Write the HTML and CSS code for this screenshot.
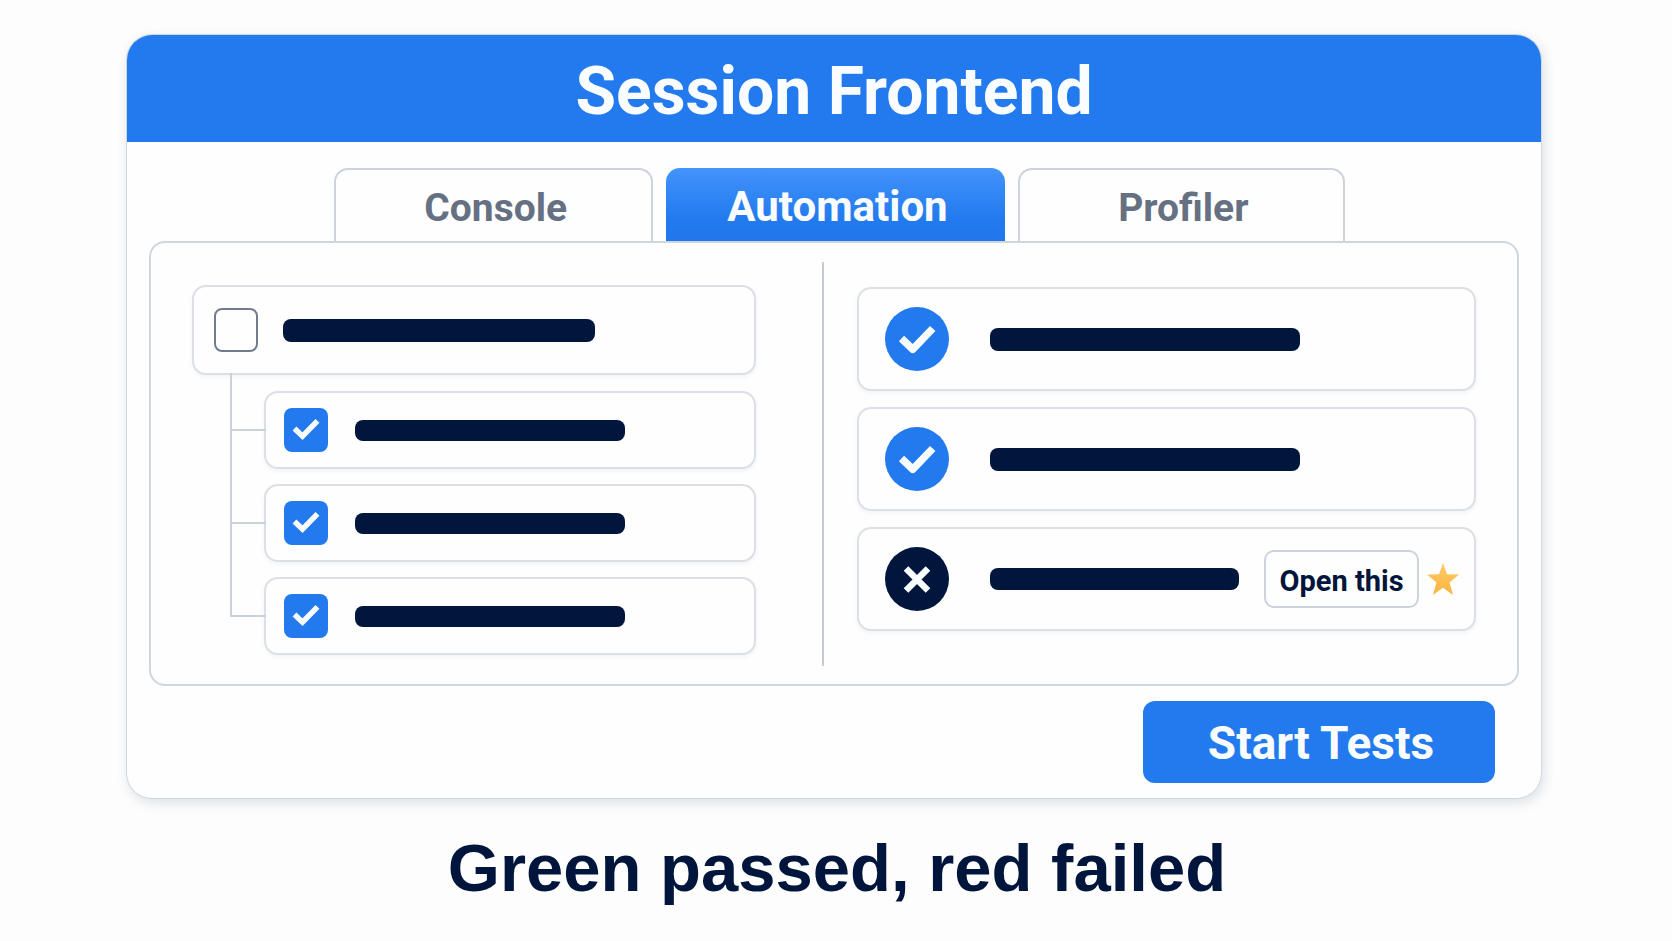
FILE: index.html
```html
<!DOCTYPE html>
<html lang="en">
<head>
    <meta charset="UTF-8">
    <meta name="viewport" content="width=device-width, initial-scale=1.0">
    <title>Session Frontend</title>
    <link rel="stylesheet" href="styles.css">
</head>
<body>

<main class="window">
    <header class="window-header">
        <h1>Session Frontend</h1>
    </header>

    <nav class="tabs" role="tablist">
        <button type="button" class="tab" role="tab">Console</button>
        <button type="button" class="tab active" role="tab" aria-selected="true">Automation</button>
        <button type="button" class="tab" role="tab">Profiler</button>
    </nav>

    <section class="panel">
        <!-- Test tree -->
        <div class="tree">
            <label class="row row-parent">
                <span class="check">
                    <input type="checkbox" aria-label="All tests">
                    <svg viewBox="0 0 44 44"><path d="M10.5 20.5L18.5 28.2L33.5 12.8"/></svg>
                </span>
                <span class="bar bar-parent"></span>
            </label>
            <ul class="children">
                <li>
                    <label class="row row-child">
                        <span class="check">
                            <input type="checkbox" aria-label="Test 1" checked>
                            <svg viewBox="0 0 44 44"><path d="M10.5 20.5L18.5 28.2L33.5 12.8"/></svg>
                        </span>
                        <span class="bar bar-child"></span>
                    </label>
                </li>
                <li>
                    <label class="row row-child">
                        <span class="check">
                            <input type="checkbox" aria-label="Test 2" checked>
                            <svg viewBox="0 0 44 44"><path d="M10.5 20.5L18.5 28.2L33.5 12.8"/></svg>
                        </span>
                        <span class="bar bar-child"></span>
                    </label>
                </li>
                <li>
                    <label class="row row-child">
                        <span class="check">
                            <input type="checkbox" aria-label="Test 3" checked>
                            <svg viewBox="0 0 44 44"><path d="M10.5 20.5L18.5 28.2L33.5 12.8"/></svg>
                        </span>
                        <span class="bar bar-child"></span>
                    </label>
                </li>
            </ul>
        </div>

        <div class="divider"></div>

        <!-- Results -->
        <ul class="results">
            <li class="row row-result">
                <svg class="status" viewBox="0 0 64 64">
                    <circle class="passed" cx="32" cy="32" r="32"/>
                    <path class="mark-check" d="M16.5 31.5L27.7 42.3L47.7 21.5"/>
                </svg>
                <span class="bar bar-result"></span>
            </li>
            <li class="row row-result">
                <svg class="status" viewBox="0 0 64 64">
                    <circle class="passed" cx="32" cy="32" r="32"/>
                    <path class="mark-check" d="M16.5 31.5L27.7 42.3L47.7 21.5"/>
                </svg>
                <span class="bar bar-result"></span>
            </li>
            <li class="row row-result">
                <svg class="status" viewBox="0 0 64 64">
                    <circle class="failed" cx="32" cy="32" r="32"/>
                    <path class="mark-cross" d="M21 21.5L43 43.5M43 21.5L21 43.5"/>
                </svg>
                <span class="bar bar-failed"></span>
                <button type="button" class="open-button">Open this</button>
                <svg class="star" viewBox="0 0 32 32">
                    <defs>
                        <linearGradient id="gold" x1="0" y1="0" x2="0" y2="1">
                            <stop offset="0" stop-color="#ffcc69"/>
                            <stop offset="1" stop-color="#fdb33f"/>
                        </linearGradient>
                    </defs>
                    <path fill="url(#gold)" d="M16 0L20 11.3L32 11.5L22.6 19.4L26 32L16 24.8L6 32L9.4 19.4L0 11.5L12 11.3Z"/>
                </svg>
            </li>
        </ul>
    </section>

    <div class="actions">
        <button type="button" class="start-button">Start Tests</button>
    </div>
</main>

<p class="caption">Green passed, red failed</p>

</body>
</html>
```
FILE: styles.css
```css
* {
    box-sizing: border-box;
}

body {
    margin: 0;
    padding: 34px 130px 0 126px;
    background-color: #fdfdfd;
    color: #00153c;
    font-family: Roboto, "Liberation Sans", sans-serif;
}

ul {
    list-style: none;
    margin: 0;
    padding: 0;
}

button {
    font-family: inherit;
    font-weight: bold;
    cursor: pointer;
}

.window {
    border: 1px solid #cfd8e3;
    border-radius: 26px;
    background-color: #fefefe;
    box-shadow: 2px 4px 12px rgba(30, 50, 80, 0.14);
    overflow: hidden;
}

.window-header {
    padding: 19px 20px 12px;
    background-color: #237aee;
    color: #fafdff;
    text-align: center;
}

.window-header h1 {
    margin: 0;
    font-size: 66px;
    line-height: 76px;
}

/* Tabs */
.tabs {
    display: grid;
    grid-template-columns: 319fr 338fr 327fr;
    gap: 13px;
    padding: 26px 196px 0 207px;
}

.tab {
    height: 73px;
    padding: 4px 0 0 4px;
    border: 2px solid #cdd3dd;
    border-bottom: none;
    border-radius: 14px 14px 0 0;
    background-color: #fefefe;
    color: #667083;
    font-size: 39px;
    line-height: 48px;
}

.tab.active {
    border: none;
    background: linear-gradient(#4394fb, #237aee 70%, #2076ea);
    color: #fafdff;
    font-size: 42px;
}

/* Panel */
.panel {
    display: grid;
    grid-template-columns: 598fr 2px 620fr;
    gap: 33px;
    margin: 0 22px;
    padding: 19px 41px 18px;
    border: 2px solid #d0d6df;
    border-radius: 16px;
}

.divider {
    height: 404px;
    background-color: #c6ccd5;
}

.row {
    display: flex;
    align-items: center;
    border: 2px solid #dce0e6;
    border-radius: 14px;
    background-color: #fefefe;
    box-shadow: 0 2px 4px rgba(30, 50, 80, 0.06);
}

.bar {
    border-radius: 8px;
    background-color: #00163d;
}

.tree {
    padding-top: 23px;
    margin-right: 33px;
}

.row-parent {
    height: 90px;
    padding-left: 20px;
    gap: 25px;
}

.row-child {
    height: 78px;
    padding-left: 18px;
    gap: 27px;
}

.children {
    display: grid;
    gap: 15px;
    padding: 16px 0 0 72px;
}

.children li {
    position: relative;
}

/* connector lines of the tree */
.children li::before {
    content: "";
    position: absolute;
    left: -34px;
    bottom: 38px;
    width: 34px;
    height: 93px;
    border-left: 2px solid #cbd1d8;
    border-bottom: 2px solid #cbd1d8;
}

.children li:first-child::before {
    height: 56px;
}

.bar-parent {
    width: 312px;
    height: 23px;
}

.bar-child {
    width: 270px;
    height: 21px;
}

.check {
    display: grid;
    width: 44px;
    height: 44px;
}

.check input,
.check svg {
    grid-area: 1 / 1;
    width: 44px;
    height: 44px;
    margin: 0;
}

.check input {
    appearance: none;
    border: 2px solid #737c8f;
    border-radius: 8px;
    background-color: #fefefe;
}

.check input:checked {
    border: none;
    background-color: #237aee;
}

.check svg {
    display: none;
    pointer-events: none;
    fill: none;
    stroke: #fafdff;
    stroke-width: 5.5;
}

.check input:checked + svg {
    display: block;
}

/* Results */
.results {
    display: grid;
    align-content: start;
    gap: 16px;
    padding-top: 25px;
}

.row-result {
    height: 104px;
    padding: 0 15px 0 26px;
}

.status {
    flex: none;
    width: 64px;
    height: 64px;
    margin-right: 41px;
}

.status path {
    fill: none;
    stroke: #fafdff;
    stroke-linejoin: round;
}

.passed {
    fill: #237aee;
}

.failed {
    fill: #00163d;
}

.mark-check {
    stroke-width: 7.5;
}

.mark-cross {
    stroke-width: 6.5;
}

.bar-result {
    width: 310px;
    height: 23px;
}

.bar-failed {
    flex: 1;
    height: 22px;
    margin-right: 25px;
}

.open-button {
    width: 155px;
    height: 58px;
    padding: 4px 0 0;
    border: 2px solid #cdd3dd;
    border-radius: 10px;
    background-color: #fefefe;
    color: #00153c;
    font-size: 29px;
}

.star {
    flex: none;
    width: 32px;
    height: 32px;
    margin-left: 8px;
}

.actions {
    display: flex;
    justify-content: flex-end;
    padding: 15px 46px 15px;
}

.start-button {
    width: 352px;
    height: 82px;
    padding: 2px 0 0 4px;
    border: none;
    border-radius: 12px;
    background-color: #237aee;
    color: #fafdff;
    font-size: 46px;
}

.caption {
    margin: 30px 0 0;
    padding-left: 6px;
    font-family: "Liberation Sans", Arial, sans-serif;
    font-size: 67px;
    font-weight: bold;
    line-height: 78px;
    text-align: center;
}
```
